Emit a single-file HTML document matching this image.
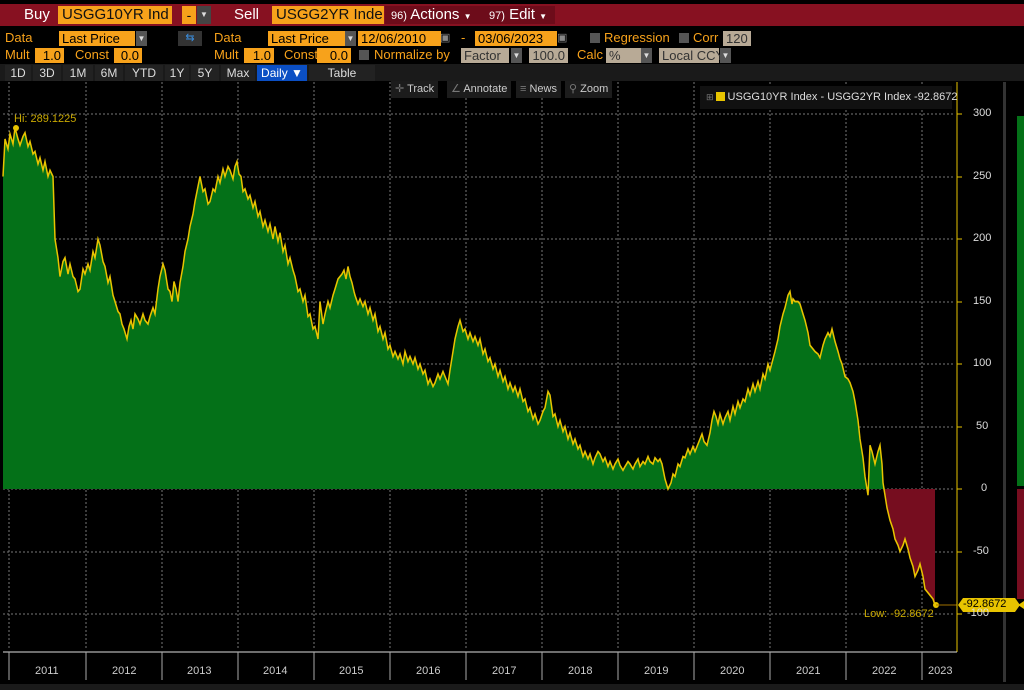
<!DOCTYPE html>
<html><head><meta charset="utf-8"><style>
body{margin:0;width:1024px;height:690px;background:#000;overflow:hidden;position:relative;font-family:"Liberation Sans",sans-serif;}
.a{position:absolute;white-space:nowrap;}
.o{color:#f7a21b;font-size:13px;}
.ob{background:#f7a21b;color:#000;font-size:13px;height:15px;line-height:15px;padding:0 3px;}
.gb{background:#b8aa96;color:#333;font-size:13px;height:15px;line-height:15px;padding:0 3px;}
.dd{background:#555;color:#ddd;font-size:8px;width:11px;height:15px;line-height:15px;text-align:center;}
.tab{color:#ddd;font-size:12px;top:65px;height:16px;line-height:16px;text-align:center;}
.btn{background:#1c1c1c;color:#ccc;font-size:11px;top:81px;height:17px;line-height:17px;padding:0 4px;}
.yl{color:#ddd;font-size:11px;}
.yr{color:#ccc;font-size:11px;}
</style></head><body>
<div class="a" style="left:0;top:4px;width:1024px;height:22px;background:#871121;"></div>
<div class="a" style="left:24px;top:6px;color:#fff;font-size:15px;">Buy</div>
<div class="a" style="left:58px;top:6px;width:110px;height:18px;background:#f7a21b;color:#111;font-size:15px;line-height:18px;padding-left:4px;overflow:hidden;">USGG10YR Ind</div>
<div class="a" style="left:182px;top:6px;width:14px;height:18px;background:#f7a21b;color:#111;font-size:14px;line-height:18px;text-align:center;">-</div>
<div class="a" style="left:197px;top:6px;width:14px;height:18px;background:#444;color:#ddd;font-size:8px;line-height:18px;text-align:center;">▼</div>
<div class="a" style="left:234px;top:6px;color:#fff;font-size:15px;">Sell</div>
<div class="a" style="left:272px;top:6px;width:108px;height:18px;background:#f7a21b;color:#111;font-size:15px;line-height:18px;padding-left:4px;overflow:hidden;">USGG2YR Inde</div>
<div class="a" style="left:385px;top:6px;width:92px;height:18px;background:#6d0c1a;color:#fff;font-size:15px;line-height:18px;padding-left:6px;"><span style="font-size:11px">96)</span> Actions <span style="font-size:8px">▼</span></div>
<div class="a" style="left:483px;top:6px;width:66px;height:18px;background:#6d0c1a;color:#fff;font-size:15px;line-height:18px;padding-left:6px;"><span style="font-size:11px">97)</span> Edit <span style="font-size:8px">▼</span></div>

<div class="a o" style="left:5px;top:30px;">Data</div>
<div class="a ob" style="left:59px;top:31px;width:70px;">Last Price</div>
<div class="a dd" style="left:136px;top:31px;">▼</div>
<div class="a" style="left:178px;top:31px;width:24px;height:15px;background:#333;color:#3a8fe0;font-size:11px;text-align:center;line-height:15px;">⇆</div>
<div class="a o" style="left:214px;top:30px;">Data</div>
<div class="a ob" style="left:268px;top:31px;width:72px;">Last Price</div>
<div class="a dd" style="left:345px;top:31px;">▼</div>
<div class="a ob" style="left:358px;top:31px;width:77px;">12/06/2010</div>
<div class="a" style="left:440px;top:31px;color:#888;font-size:11px;">▣</div>
<div class="a o" style="left:461px;top:30px;">-</div>
<div class="a ob" style="left:475px;top:31px;width:76px;">03/06/2023</div>
<div class="a" style="left:557px;top:31px;color:#888;font-size:11px;">▣</div>
<div class="a" style="left:590px;top:33px;width:10px;height:10px;background:#555;"></div>
<div class="a o" style="left:604px;top:30px;">Regression</div>
<div class="a" style="left:679px;top:33px;width:10px;height:10px;background:#555;"></div>
<div class="a o" style="left:693px;top:30px;">Corr</div>
<div class="a gb" style="left:723px;top:31px;">120</div>

<div class="a o" style="left:5px;top:47px;">Mult</div>
<div class="a ob" style="left:35px;top:48px;width:23px;text-align:right;">1.0</div>
<div class="a o" style="left:75px;top:47px;">Const</div>
<div class="a ob" style="left:114px;top:48px;width:22px;text-align:right;">0.0</div>
<div class="a o" style="left:214px;top:47px;">Mult</div>
<div class="a ob" style="left:244px;top:48px;width:24px;text-align:right;">1.0</div>
<div class="a o" style="left:284px;top:47px;">Const</div>
<div class="a ob" style="left:317px;top:48px;width:28px;text-align:right;">0.0</div>
<div class="a" style="left:359px;top:50px;width:10px;height:10px;background:#555;"></div>
<div class="a o" style="left:374px;top:47px;">Normalize by</div>
<div class="a gb" style="left:461px;top:48px;width:42px;">Factor</div>
<div class="a dd" style="left:511px;top:48px;">▼</div>
<div class="a gb" style="left:529px;top:48px;width:33px;text-align:right;">100.0</div>
<div class="a o" style="left:577px;top:47px;">Calc</div>
<div class="a gb" style="left:606px;top:48px;width:29px;">%</div>
<div class="a dd" style="left:641px;top:48px;">▼</div>
<div class="a gb" style="left:659px;top:48px;width:54px;">Local CCY</div>
<div class="a dd" style="left:720px;top:48px;">▼</div>

<div class="a" style="left:0;top:64px;width:1024px;height:17px;background:#1a1a1a;"></div>
<div class="a tab" style="left:5px;width:26px;background:#222;">1D</div>
<div class="a tab" style="left:33px;width:28px;background:#222;">3D</div>
<div class="a tab" style="left:63px;width:30px;background:#222;">1M</div>
<div class="a tab" style="left:95px;width:28px;background:#222;">6M</div>
<div class="a tab" style="left:125px;width:38px;background:#222;">YTD</div>
<div class="a tab" style="left:165px;width:24px;background:#222;">1Y</div>
<div class="a tab" style="left:191px;width:28px;background:#222;">5Y</div>
<div class="a tab" style="left:221px;width:34px;background:#222;">Max</div>
<div class="a tab" style="left:257px;width:50px;background:#0b4fc4;color:#fff;">Daily ▼</div>
<div class="a tab" style="left:309px;width:66px;background:#222;">Table</div>

<svg class="a" style="left:0;top:0" width="1024" height="690">
<g stroke="#777" stroke-dasharray="2,2" stroke-width="1">
<line x1="3" x2="955" y1="114" y2="114"/><line x1="3" x2="955" y1="177" y2="177"/><line x1="3" x2="955" y1="239" y2="239"/><line x1="3" x2="955" y1="302" y2="302"/><line x1="3" x2="955" y1="364" y2="364"/><line x1="3" x2="955" y1="427" y2="427"/><line x1="3" x2="955" y1="489" y2="489"/><line x1="3" x2="955" y1="552" y2="552"/><line x1="3" x2="955" y1="614" y2="614"/>
<line x1="9" x2="9" y1="82" y2="650"/><line x1="86" x2="86" y1="82" y2="650"/><line x1="162" x2="162" y1="82" y2="650"/><line x1="238" x2="238" y1="82" y2="650"/><line x1="314" x2="314" y1="82" y2="650"/><line x1="390" x2="390" y1="82" y2="650"/><line x1="466" x2="466" y1="82" y2="650"/><line x1="542" x2="542" y1="82" y2="650"/><line x1="618" x2="618" y1="82" y2="650"/><line x1="694" x2="694" y1="82" y2="650"/><line x1="770" x2="770" y1="82" y2="650"/><line x1="846" x2="846" y1="82" y2="650"/><line x1="922" x2="922" y1="82" y2="650"/>
</g>
<defs>
<clipPath id="up"><rect x="0" y="0" width="1024" height="489"/></clipPath>
<clipPath id="dn"><rect x="0" y="489" width="1024" height="200"/></clipPath>
<path id="ln" d="M3,250 5,280 8,272 10,284 13,276 15,289 18,280 20,275 23,282 25,285 28,274 30,278 33,268 35,270 38,260 40,265 43,255 45,262 48,250 50,255 53,250 55,200 58,185 60,170 63,182 65,185 68,172 70,180 73,170 75,168 78,158 80,160 83,176 85,172 88,180 90,175 93,190 95,185 98,200 100,195 103,182 105,178 108,165 110,170 113,155 115,150 118,142 120,140 122,132 124,128 127,120 129,130 131,135 133,128 135,140 138,136 140,132 143,140 145,135 148,132 150,138 153,145 155,140 158,160 160,170 163,180 165,175 168,160 170,158 172,150 174,166 176,160 178,150 180,165 183,178 185,190 188,200 190,210 193,220 195,230 198,242 200,250 203,238 205,240 208,228 210,230 213,240 215,238 218,250 220,245 223,256 225,250 228,258 230,255 233,248 235,258 237,262 239,252 241,250 243,238 245,240 248,232 250,235 253,225 255,230 258,218 260,222 263,210 265,215 268,206 270,212 273,200 275,210 278,198 280,205 283,190 285,195 288,180 290,185 293,175 295,170 298,158 300,160 303,150 305,155 308,138 310,140 313,128 315,130 318,120 320,150 323,132 325,140 328,150 330,145 333,155 335,160 338,168 340,170 342,172 344,175 346,168 348,178 350,170 352,165 354,158 355,155 358,148 360,152 363,146 365,150 368,140 370,145 373,135 375,140 378,126 380,130 383,120 385,125 388,112 390,115 393,106 395,110 398,104 400,108 403,100 405,110 408,102 410,106 413,100 415,105 418,96 420,100 423,92 425,95 428,84 430,88 433,82 435,85 438,92 440,88 443,94 445,90 448,84 450,95 453,110 455,120 458,130 460,135 463,126 465,128 468,120 470,125 473,118 475,122 478,115 480,120 483,108 485,112 488,102 490,105 493,96 495,100 498,90 500,95 503,86 505,90 508,80 510,85 513,78 515,82 518,74 520,80 523,70 525,72 528,62 530,65 533,56 535,60 538,52 540,55 543,62 545,65 548,78 550,75 553,58 555,60 558,50 560,55 563,46 565,50 568,40 570,45 573,36 575,40 578,32 580,35 583,26 585,30 588,24 590,28 593,20 595,25 598,30 600,28 603,22 605,25 608,18 610,22 613,16 615,20 618,24 620,19 623,15 625,18 628,22 630,20 633,16 635,20 638,24 640,18 643,22 645,20 648,26 650,22 653,20 655,25 658,22 660,24 662,20 665,8 668,0 671,5 673,12 675,10 678,20 680,18 683,26 685,25 688,32 690,28 693,34 695,30 698,36 700,40 702,44 704,38 707,35 710,45 712,55 714,62 716,58 718,52 720,60 723,52 725,57 728,62 730,55 733,66 735,60 738,70 740,65 743,72 745,70 748,80 750,75 753,84 755,78 758,86 760,80 763,92 765,88 768,100 770,95 773,104 775,110 778,120 780,130 783,140 785,145 788,155 790,158 792,148 793,152 795,150 798,150 800,148 803,140 805,135 808,125 810,115 813,112 815,110 818,108 820,105 823,115 825,120 828,125 830,122 832,128 835,118 838,110 840,104 842,100 845,90 848,88 850,85 853,78 855,70 858,55 860,40 863,25 865,10 868,-5 870,35 872,30 875,20 878,30 880,35 882,20 883,5 885,-5 887,-15 890,-25 893,-32 895,-40 898,-45 900,-50 903,-45 905,-40 908,-48 910,-55 913,-62 915,-70 918,-65 920,-60 923,-70 925,-80 928,-83 930,-85 933,-88 935,-92.87"/>
</defs>
<g transform="translate(0,489) scale(1,-1.25)">
<path d="M3,0 L3,250 5,280 8,272 10,284 13,276 15,289 18,280 20,275 23,282 25,285 28,274 30,278 33,268 35,270 38,260 40,265 43,255 45,262 48,250 50,255 53,250 55,200 58,185 60,170 63,182 65,185 68,172 70,180 73,170 75,168 78,158 80,160 83,176 85,172 88,180 90,175 93,190 95,185 98,200 100,195 103,182 105,178 108,165 110,170 113,155 115,150 118,142 120,140 122,132 124,128 127,120 129,130 131,135 133,128 135,140 138,136 140,132 143,140 145,135 148,132 150,138 153,145 155,140 158,160 160,170 163,180 165,175 168,160 170,158 172,150 174,166 176,160 178,150 180,165 183,178 185,190 188,200 190,210 193,220 195,230 198,242 200,250 203,238 205,240 208,228 210,230 213,240 215,238 218,250 220,245 223,256 225,250 228,258 230,255 233,248 235,258 237,262 239,252 241,250 243,238 245,240 248,232 250,235 253,225 255,230 258,218 260,222 263,210 265,215 268,206 270,212 273,200 275,210 278,198 280,205 283,190 285,195 288,180 290,185 293,175 295,170 298,158 300,160 303,150 305,155 308,138 310,140 313,128 315,130 318,120 320,150 323,132 325,140 328,150 330,145 333,155 335,160 338,168 340,170 342,172 344,175 346,168 348,178 350,170 352,165 354,158 355,155 358,148 360,152 363,146 365,150 368,140 370,145 373,135 375,140 378,126 380,130 383,120 385,125 388,112 390,115 393,106 395,110 398,104 400,108 403,100 405,110 408,102 410,106 413,100 415,105 418,96 420,100 423,92 425,95 428,84 430,88 433,82 435,85 438,92 440,88 443,94 445,90 448,84 450,95 453,110 455,120 458,130 460,135 463,126 465,128 468,120 470,125 473,118 475,122 478,115 480,120 483,108 485,112 488,102 490,105 493,96 495,100 498,90 500,95 503,86 505,90 508,80 510,85 513,78 515,82 518,74 520,80 523,70 525,72 528,62 530,65 533,56 535,60 538,52 540,55 543,62 545,65 548,78 550,75 553,58 555,60 558,50 560,55 563,46 565,50 568,40 570,45 573,36 575,40 578,32 580,35 583,26 585,30 588,24 590,28 593,20 595,25 598,30 600,28 603,22 605,25 608,18 610,22 613,16 615,20 618,24 620,19 623,15 625,18 628,22 630,20 633,16 635,20 638,24 640,18 643,22 645,20 648,26 650,22 653,20 655,25 658,22 660,24 662,20 665,8 668,0 671,5 673,12 675,10 678,20 680,18 683,26 685,25 688,32 690,28 693,34 695,30 698,36 700,40 702,44 704,38 707,35 710,45 712,55 714,62 716,58 718,52 720,60 723,52 725,57 728,62 730,55 733,66 735,60 738,70 740,65 743,72 745,70 748,80 750,75 753,84 755,78 758,86 760,80 763,92 765,88 768,100 770,95 773,104 775,110 778,120 780,130 783,140 785,145 788,155 790,158 792,148 793,152 795,150 798,150 800,148 803,140 805,135 808,125 810,115 813,112 815,110 818,108 820,105 823,115 825,120 828,125 830,122 832,128 835,118 838,110 840,104 842,100 845,90 848,88 850,85 853,78 855,70 858,55 860,40 863,25 865,10 868,-5 870,35 872,30 875,20 878,30 880,35 882,20 883,5 885,0 Z" fill="#047118"/>
<path d="M868,0 L868,-5 870,0 Z M883,0 L885,-5 887,-15 890,-25 893,-32 895,-40 898,-45 900,-50 903,-45 905,-40 908,-48 910,-55 913,-62 915,-70 918,-65 920,-60 923,-70 925,-80 928,-83 930,-85 933,-88 935,-92.87 L935,0 Z" fill="#760d1f"/>
<use href="#ln" fill="none" stroke="#e8c400" stroke-width="1.5" vector-effect="non-scaling-stroke"/>
</g>
<circle cx="16" cy="128" r="3" fill="#e8c400"/>
<circle cx="936" cy="605" r="3" fill="#e8c400"/>
<line x1="936" x2="957" y1="605" y2="605" stroke="#a07000" stroke-width="1"/>
<line x1="957" x2="957" y1="82" y2="652" stroke="#e8c400" stroke-width="1"/>
<line x1="3" x2="957" y1="652" y2="652" stroke="#ddd" stroke-width="1"/>
<g stroke="#e8c400"><line x1="957" x2="962" y1="114" y2="114"/><line x1="957" x2="962" y1="177" y2="177"/><line x1="957" x2="962" y1="239" y2="239"/><line x1="957" x2="962" y1="302" y2="302"/><line x1="957" x2="962" y1="364" y2="364"/><line x1="957" x2="962" y1="427" y2="427"/><line x1="957" x2="962" y1="489" y2="489"/><line x1="957" x2="962" y1="552" y2="552"/><line x1="957" x2="962" y1="614" y2="614"/></g>
<g stroke="#aaa"><line x1="9" x2="9" y1="652" y2="680"/><line x1="86" x2="86" y1="652" y2="680"/><line x1="162" x2="162" y1="652" y2="680"/><line x1="238" x2="238" y1="652" y2="680"/><line x1="314" x2="314" y1="652" y2="680"/><line x1="390" x2="390" y1="652" y2="680"/><line x1="466" x2="466" y1="652" y2="680"/><line x1="542" x2="542" y1="652" y2="680"/><line x1="618" x2="618" y1="652" y2="680"/><line x1="694" x2="694" y1="652" y2="680"/><line x1="770" x2="770" y1="652" y2="680"/><line x1="846" x2="846" y1="652" y2="680"/><line x1="922" x2="922" y1="652" y2="680"/></g>
<rect x="1003" y="82" width="3" height="600" fill="#333"/>
<rect x="1017" y="116" width="7" height="370" fill="#047118"/>
<rect x="1017" y="489" width="7" height="110" fill="#760d1f"/>
<rect x="0" y="684" width="1024" height="6" fill="#1a1a1a"/>
<path d="M958,605 l5,-7 h52 l5,7 -5,7 h-52z" fill="#e8c400"/>
<path d="M1018,605 l6,-4 v8z" fill="#e8c400"/>
</svg>
<div class="a" style="left:14px;top:113px;color:#c9a800;font-size:11px;">Hi: 289.1225</div>
<div class="a" style="left:864px;top:608px;color:#c9a800;font-size:11px;">Low: -92.8672</div>
<div class="a" style="left:963px;top:598px;color:#000;font-size:11px;">-92.8672</div>
<div class="a btn" style="left:391px;"><span style="color:#777">✛</span> Track</div>
<div class="a btn" style="left:447px;"><span style="color:#777">∠</span> Annotate</div>
<div class="a btn" style="left:516px;"><span style="color:#777">≡</span> News</div>
<div class="a btn" style="left:565px;"><span style="color:#777">⚲</span> Zoom</div>
<div class="a" style="left:700px;top:86px;width:252px;height:23px;background:#111;color:#ddd;font-size:11px;line-height:23px;"><span style="color:#777;font-size:9px;margin-left:6px">⊞</span><span style="display:inline-block;width:9px;height:9px;background:#e8c400;margin:0 3px 0 2px;vertical-align:-1px"></span>USGG10YR Index - USGG2YR Index -92.8672</div>
<div class="a yl" style="left:973px;top:107px;">300</div>
<div class="a yl" style="left:973px;top:170px;">250</div>
<div class="a yl" style="left:973px;top:232px;">200</div>
<div class="a yl" style="left:973px;top:295px;">150</div>
<div class="a yl" style="left:973px;top:357px;">100</div>
<div class="a yl" style="left:976px;top:420px;">50</div>
<div class="a yl" style="left:981px;top:482px;">0</div>
<div class="a yl" style="left:973px;top:545px;">-50</div>
<div class="a yl" style="left:967px;top:607px;">-100</div>
<div class="a yr" style="left:35px;top:665px;">2011</div>
<div class="a yr" style="left:112px;top:665px;">2012</div>
<div class="a yr" style="left:187px;top:665px;">2013</div>
<div class="a yr" style="left:263px;top:665px;">2014</div>
<div class="a yr" style="left:339px;top:665px;">2015</div>
<div class="a yr" style="left:416px;top:665px;">2016</div>
<div class="a yr" style="left:492px;top:665px;">2017</div>
<div class="a yr" style="left:568px;top:665px;">2018</div>
<div class="a yr" style="left:644px;top:665px;">2019</div>
<div class="a yr" style="left:720px;top:665px;">2020</div>
<div class="a yr" style="left:796px;top:665px;">2021</div>
<div class="a yr" style="left:872px;top:665px;">2022</div>
<div class="a yr" style="left:928px;top:665px;">2023</div>
</body></html>
